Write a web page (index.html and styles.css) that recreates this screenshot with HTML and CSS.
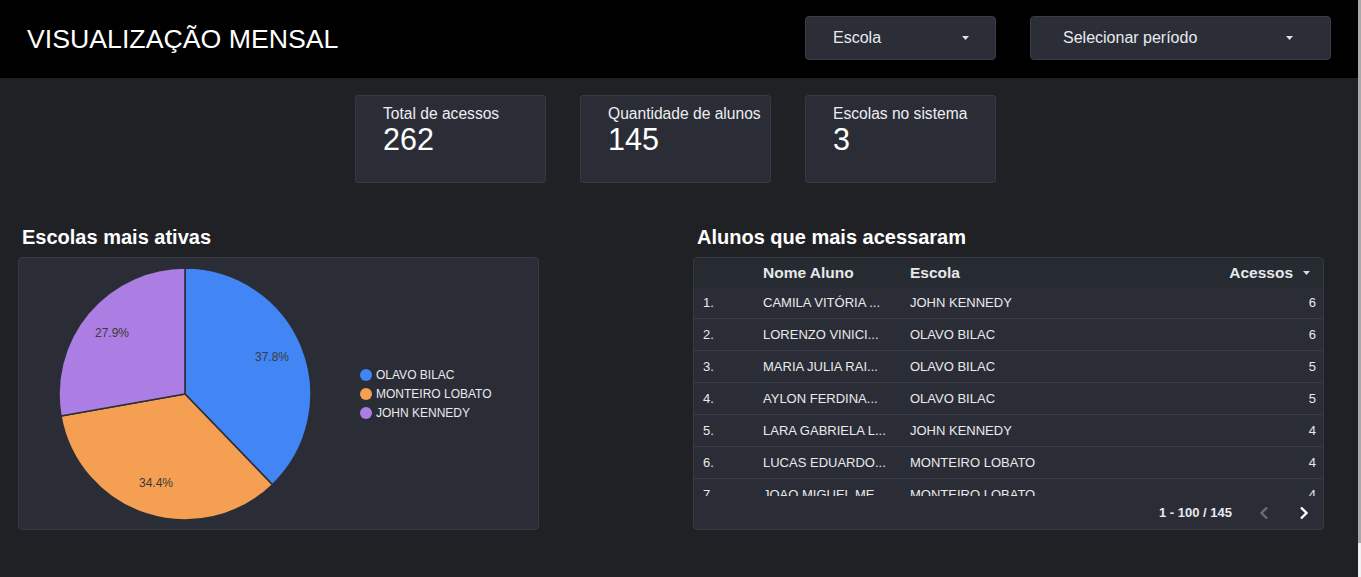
FILE: index.html
```html
<!DOCTYPE html>
<html lang="pt-BR">
<head>
<meta charset="utf-8">
<title>Visualização Mensal</title>
<link rel="stylesheet" href="styles.css">
</head>
<body>
<div class="page">
  <header class="topbar">
    <h1 class="title">VISUALIZAÇÃO MENSAL</h1>
    <div class="controls">
      <div class="select select-school"><span>Escola</span><svg class="caret" width="7" height="4" viewBox="0 0 7 4"><path d="M0 0H7L3.5 4Z" fill="#e0e0e0"/></svg></div>
      <div class="select select-period"><span>Selecionar período</span><svg class="caret" width="7" height="4" viewBox="0 0 7 4"><path d="M0 0H7L3.5 4Z" fill="#e0e0e0"/></svg></div>
    </div>
  </header>

  <section class="kpis">
    <div class="kpi"><div class="kpi-label">Total de acessos</div><div class="kpi-value">262</div></div>
    <div class="kpi"><div class="kpi-label">Quantidade de alunos</div><div class="kpi-value">145</div></div>
    <div class="kpi"><div class="kpi-label">Escolas no sistema</div><div class="kpi-value">3</div></div>
  </section>

  <section class="charts">
    <div class="col">
      <h2 class="section-title">Escolas mais ativas</h2>
      <div class="panel pie-panel">
        <svg class="pie" width="254" height="254" viewBox="0 0 254 254">
          <path d="M127 127 L127 1 A126 126 0 0 1 214.46 217.71 Z" fill="#4285f4" stroke="#2c2e37" stroke-width="1.6" stroke-linejoin="round"/>
          <path d="M127 127 L214.46 217.71 A126 126 0 0 1 2.94 149.05 Z" fill="#f59f53" stroke="#2c2e37" stroke-width="1.6" stroke-linejoin="round"/>
          <path d="M127 127 L2.94 149.05 A126 126 0 0 1 127 1 Z" fill="#ac7ee3" stroke="#2c2e37" stroke-width="1.6" stroke-linejoin="round"/>
          <text class="pie-label" x="214" y="94">37.8%</text>
          <text class="pie-label" x="98" y="220">34.4%</text>
          <text class="pie-label" x="54" y="70">27.9%</text>
        </svg>
        <ul class="legend">
          <li class="legend-item"><span class="dot dot-blue"></span>OLAVO BILAC</li>
          <li class="legend-item"><span class="dot dot-orange"></span>MONTEIRO LOBATO</li>
          <li class="legend-item"><span class="dot dot-purple"></span>JOHN KENNEDY</li>
        </ul>
      </div>
    </div>

    <div class="col">
      <h2 class="section-title">Alunos que mais acessaram</h2>
      <div class="panel table-panel">
        <div class="trow thead">
          <span></span><span>Nome Aluno</span><span>Escola</span>
          <span class="num sort">Acessos<svg class="caret" width="7" height="4" viewBox="0 0 7 4"><path d="M0 0H7L3.5 4Z" fill="#d8d8d8"/></svg></span>
        </div>
        <div class="tbody">
          <div class="trow"><span>1.</span><span>CAMILA VITÓRIA ...</span><span>JOHN KENNEDY</span><span class="num">6</span></div>
          <div class="trow"><span>2.</span><span>LORENZO VINICI...</span><span>OLAVO BILAC</span><span class="num">6</span></div>
          <div class="trow"><span>3.</span><span>MARIA JULIA RAI...</span><span>OLAVO BILAC</span><span class="num">5</span></div>
          <div class="trow"><span>4.</span><span>AYLON FERDINA...</span><span>OLAVO BILAC</span><span class="num">5</span></div>
          <div class="trow"><span>5.</span><span>LARA GABRIELA L...</span><span>JOHN KENNEDY</span><span class="num">4</span></div>
          <div class="trow"><span>6.</span><span>LUCAS EDUARDO...</span><span>MONTEIRO LOBATO</span><span class="num">4</span></div>
          <div class="trow"><span>7.</span><span>JOAO MIGUEL ME...</span><span>MONTEIRO LOBATO</span><span class="num">4</span></div>
        </div>
        <div class="tfoot">
          <span class="range">1 - 100 / 145</span>
          <svg class="chev chev-prev" width="10" height="14" viewBox="0 0 10 14"><path d="M8 1.5L2.5 7L8 12.5" fill="none" stroke="#6a6c72" stroke-width="2.4"/></svg>
          <svg class="chev chev-next" width="10" height="14" viewBox="0 0 10 14"><path d="M2 1.5L7.5 7L2 12.5" fill="none" stroke="#ffffff" stroke-width="2.4"/></svg>
        </div>
      </div>
    </div>
  </section>
</div>
<div class="scrollbar"></div>
</body>
</html>
```
FILE: styles.css
```css
* { box-sizing: border-box; }

html, body {
  margin: 0;
  height: 577px;
  overflow: hidden;
}

body {
  display: flex;
  background: #202125;
  font-family: "Liberation Sans", Arial, sans-serif;
  color: #e8eaed;
}

.page {
  width: 1358px;
  flex: none;
}

.scrollbar {
  width: 3px;
  flex: none;
  background: linear-gradient(#a9a9a9 0, #a9a9a9 543px, #f1f1f1 543px);
}

/* header */
.topbar {
  height: 78px;
  background: #000;
  display: flex;
  justify-content: space-between;
  align-items: flex-start;
  padding: 0 27px;
}

.title {
  margin: 24px 0 0;
  font-size: 26.7px;
  line-height: 30px;
  font-weight: 400;
  color: #fff;
}

.controls {
  display: flex;
  gap: 34px;
  padding-top: 16px;
}

.select {
  height: 44px;
  border: 1px solid #3a3d46;
  border-radius: 4px;
  background: #2b2e37;
  display: flex;
  align-items: center;
  justify-content: space-between;
  font-size: 16px;
  color: #e8eaed;
}

.select-school {
  width: 191px;
  padding: 0 26px 0 27px;
}

.select-period {
  width: 301px;
  padding: 0 37px 0 32px;
}

.caret { display: block; }

/* KPI cards */
.kpis {
  display: flex;
  gap: 34px;
  padding-left: 355px;
  margin-top: 17px;
}

.kpi {
  width: 191px;
  height: 88px;
  background: #2b2d36;
  border: 1px solid #363942;
  border-radius: 3px;
  padding: 9px 0 0 27px;
}

.kpi-label {
  font-size: 15.6px;
  line-height: 17px;
  color: #eceef0;
}

.kpi-value {
  margin-top: 2px;
  font-size: 30.5px;
  line-height: 30px;
  color: #fff;
}

/* charts */
.charts {
  display: grid;
  grid-template-columns: 521px 631px;
  column-gap: 154px;
  padding-left: 18px;
  margin-top: 42px;
}

.section-title {
  margin: 0 0 8px 4px;
  font-size: 20px;
  line-height: 24px;
  font-weight: 700;
  color: #fff;
}

.panel {
  height: 273px;
  background: #2b2d36;
  border: 1px solid #363942;
  border-radius: 4px;
}

.pie-panel {
  display: flex;
  align-items: center;
  padding-left: 39px;
}

.pie { display: block; flex: none; }

.pie-label {
  font-family: "Liberation Sans", Arial, sans-serif;
  font-size: 12px;
  fill: #3a3a3a;
  text-anchor: middle;
}

.legend {
  list-style: none;
  margin: 0 0 0 48px;
  padding: 0;
  display: flex;
  flex-direction: column;
  gap: 5px;
}

.legend-item {
  display: flex;
  align-items: center;
  gap: 4px;
  font-size: 12px;
  line-height: 14px;
  color: #e8eaed;
}

.dot {
  width: 12px;
  height: 12px;
  border-radius: 50%;
  flex: none;
}
.dot-blue { background: #4285f4; }
.dot-orange { background: #f59f53; }
.dot-purple { background: #ac7ee3; }

/* table */
.table-panel {
  display: flex;
  flex-direction: column;
  overflow: hidden;
}

.trow {
  display: grid;
  grid-template-columns: 60px 147px 1fr auto;
  align-items: center;
  height: 32px;
  padding: 0 7px 0 9px;
  border-bottom: 1px solid #3a3d46;
  font-size: 13px;
  color: #e8eaed;
  white-space: nowrap;
}

.thead {
  height: 29px;
  flex: none;
  background: #262b32;
  border-bottom: none;
  padding-right: 13px;
  font-size: 15.5px;
  font-weight: 700;
  color: #e6e8ea;
}

.num { text-align: right; }

.sort {
  display: flex;
  align-items: center;
  gap: 10px;
}

.tbody {
  height: 209px;
  flex: none;
  overflow: hidden;
}

.tfoot {
  flex: 1;
  display: flex;
  align-items: center;
  justify-content: flex-end;
  padding-right: 14px;
  font-size: 13px;
  font-weight: 700;
  color: #e8eaed;
}

.chev { display: block; }
.chev-prev { margin-left: 27px; }
.chev-next { margin-left: 30px; }
```
